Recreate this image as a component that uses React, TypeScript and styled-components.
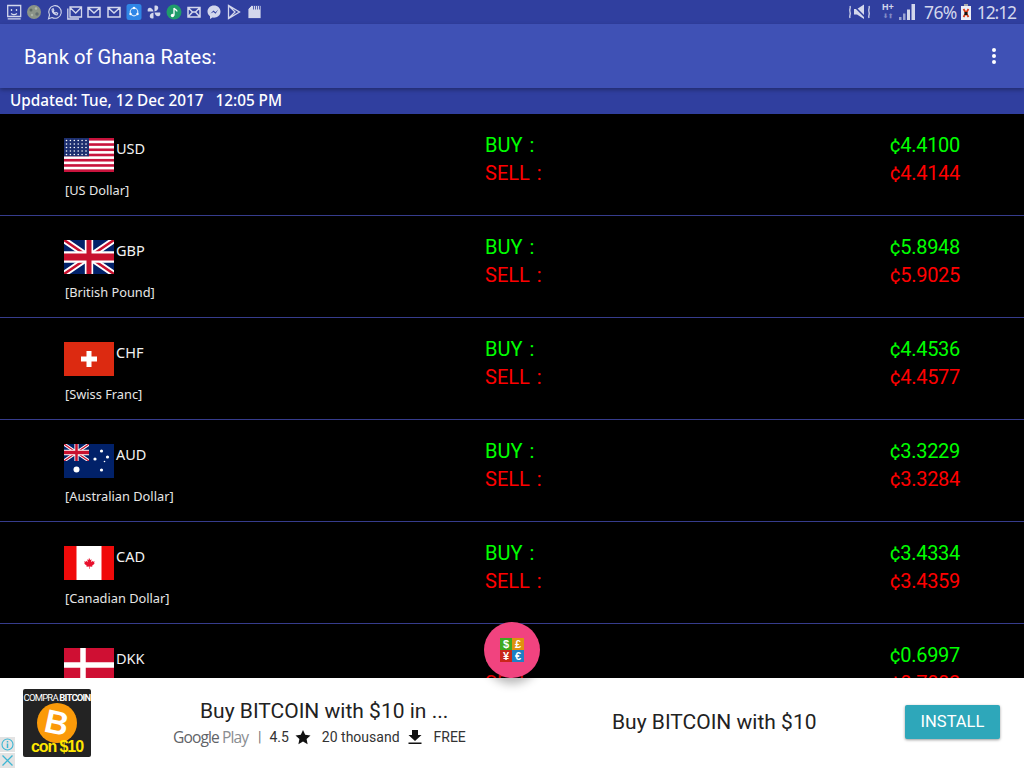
import React from "react";
import styled, { createGlobalStyle } from "styled-components";

const GlobalStyle = createGlobalStyle`
  html, body {
    margin: 0;
    padding: 0;
    background: #000;
    font-family: "Noto Sans", "Open Sans", sans-serif;
  }
  * { box-sizing: border-box; }
`;

const Screen = styled.div`
  position: relative;
  width: 1024px;
  height: 768px;
  overflow: hidden;
  display: flex;
  flex-direction: column;
  background: #000;
`;

const StatusBar = styled.div`
  height: 24px;
  flex: none;
  background: #303f9f;
  display: flex;
  align-items: center;
  justify-content: space-between;
  padding: 0 8px 0 7px;
  color: #d3d7ec;
`;

const StatusGroup = styled.div`
  display: flex;
  align-items: center;
  gap: 6px;
`;

const StatusRight = styled.div`
  display: flex;
  align-items: center;
`;

const StatusIconSvg = styled.svg`
  width: 14px;
  height: 16px;
  display: block;
  flex: none;
`;

const MuteIcon = styled.svg`
  width: 23px;
  height: 16px;
  display: block;
`;

const HPlus = styled.div`
  width: 14px;
  height: 18px;
  margin-left: 10px;
  font: 700 9px/9px "Liberation Sans", sans-serif;
  text-align: center;
  white-space: nowrap;
  span { display: block; font-size: 6px; line-height: 8px; opacity: 0.5; }
`;

const SignalIcon = styled.svg`
  width: 16px;
  height: 16px;
  margin-left: 4px;
  display: block;
`;

const Percent = styled.span`
  margin-left: 9px;
  font: 400 17.5px/24px "Noto Sans", sans-serif;
  letter-spacing: -0.6px;
`;

const BatteryIcon = styled.svg`
  width: 10px;
  height: 16px;
  margin-left: 4px;
  display: block;
`;

const Clock = styled.span`
  margin-left: 6px;
  font: 400 17.5px/24px "Noto Sans", sans-serif;
  letter-spacing: -1.1px;
`;

const Toolbar = styled.header`
  position: relative;
  z-index: 2;
  height: 64px;
  flex: none;
  background: #3f51b5;
  box-shadow: 0 2px 4px rgba(0, 0, 0, 0.3);
  display: flex;
  align-items: center;
  justify-content: space-between;
  padding: 2px 28px 0 24px;
`;

const ToolbarTitle = styled.h1`
  margin: 0;
  font: 400 20.2px/28px Roboto, sans-serif;
  color: #fff;
`;

const MoreDots = styled.div`
  display: flex;
  flex-direction: column;
  gap: 2px;
  margin-top: -2px;
  i { display: block; width: 4px; height: 4px; border-radius: 50%; background: #fff; }
`;

const UpdatedBar = styled.div`
  height: 26px;
  flex: none;
  background: #303f9f;
  padding: 0 10px;
  font: 500 15.3px/24px "Noto Sans", sans-serif;
  color: #fff;
  white-space: pre;
`;

const RateList = styled.div`
  flex: 1;
  min-height: 0;
  overflow: hidden;
  background: #000;
`;

const Row = styled.div`
  height: 102px;
  padding: 24px 64px 0;
  border-bottom: 1px solid #363c8c;
  display: grid;
  grid-template-columns: 421px 1fr auto;
`;

const CurrencyCol = styled.div`
  display: flex;
  flex-direction: column;
`;

const CodeLine = styled.div`
  display: flex;
  align-items: flex-start;
  gap: 2px;
  height: 34px;
`;

const FlagSvg = styled.svg`
  width: 50px;
  height: 34px;
  display: block;
  flex: none;
`;

const Code = styled.span`
  font: 400 14.5px/20px "Noto Sans", sans-serif;
  color: #f2f2f2;
`;

const CurrencyName = styled.div`
  margin: 8px 0 0 1px;
  font: 400 12.8px/20px "Noto Sans", sans-serif;
  color: #e6e6e6;
`;

const RateColumn = styled.div<{ $right?: boolean }>`
  display: flex;
  flex-direction: column;
  margin-top: -7px;
  text-align: ${(p) => (p.$right ? "right" : "left")};
  letter-spacing: ${(p) => (p.$right ? "-0.3px" : "0")};
  word-spacing: ${(p) => (p.$right ? "0" : "2px")};
`;

const RateText = styled.div<{ $sell?: boolean }>`
  height: 28px;
  font: 400 20px/28px Roboto, sans-serif;
  color: ${(p) => (p.$sell ? "#ff0000" : "#00ff00")};
`;

const Fab = styled.div`
  position: absolute;
  z-index: 5;
  left: 484px;
  top: 622px;
  width: 56px;
  height: 56px;
  border-radius: 50%;
  background: #f1437f;
  box-shadow: 0 6px 10px rgba(0, 0, 0, 0.28);
  display: flex;
  align-items: center;
  justify-content: center;
`;

const FabGrid = styled.div`
  display: grid;
  grid-template-columns: 12px 12px;
  grid-auto-rows: 12px;
`;

const FabCell = styled.span<{ $bg: string }>`
  background: ${(p) => p.$bg};
  color: #fff;
  font: 700 11px/12px "Liberation Sans", sans-serif;
  text-align: center;
`;

const AdBanner = styled.div`
  position: relative;
  z-index: 3;
  height: 90px;
  flex: none;
  background: #fff;
  display: grid;
  grid-template-columns: 23px 68px 81px 440px 1fr auto;
  align-items: center;
  padding-right: 24px;
  font-family: Roboto, sans-serif;
  color: #222;
`;

const AdIcon = styled.div`
  grid-column: 2;
  position: relative;
  width: 68px;
  height: 68px;
  background: #232323;
  border-radius: 2px;
  overflow: hidden;
  display: flex;
  flex-direction: column;
  align-items: center;
`;

const AdIconCaption = styled.div`
  margin-top: 3px;
  font: 400 9.5px/11px Roboto, sans-serif;
  letter-spacing: -0.8px;
  color: #fff;
  white-space: nowrap;
  b { font-weight: 700; }
`;

const CoinCircle = styled.div`
  width: 40px;
  height: 40px;
  border-radius: 50%;
  background: #fb9a09;
  color: #fff;
  font: 700 33px/39px "Liberation Sans", sans-serif;
  text-align: center;
  span { display: inline-block; transform: rotate(12deg); }
`;

const AdIconPrice = styled.div`
  position: absolute;
  left: 0;
  right: 0;
  bottom: 1px;
  text-align: center;
  font: 700 16px/18px "Liberation Sans", sans-serif;
  letter-spacing: -1.1px;
  color: #ffe600;
`;

const AdInfo = styled.div`
  grid-column: 4;
  display: flex;
  flex-direction: column;
  gap: 3px;
  margin-top: -1px;
`;

const AdTitle = styled.div`
  margin-left: 28px;
  font: 400 21px/26px Roboto, sans-serif;
  white-space: nowrap;
`;

const AdMeta = styled.div`
  display: flex;
  align-items: center;
  font: 400 14px/20px Roboto, sans-serif;
  color: #333;
  white-space: nowrap;
`;

const PlayLabel = styled.span`
  margin-left: 1px;
  width: 75px;
  font: 400 15.6px/20px "Open Sans", sans-serif;
  letter-spacing: -0.9px;
  color: #5f6368;
  em { font-style: normal; color: #8a8d91; }
`;

const MetaSep = styled.span`
  margin: 0 8px 0 10px;
  color: #777;
`;

const MetaIcon = styled.svg<{ $left: number; $right: number }>`
  width: 16px;
  height: 16px;
  margin-left: ${(p) => p.$left}px;
  margin-right: ${(p) => p.$right}px;
  flex: none;
`;

const AdHeadline = styled.div`
  grid-column: 5;
  font: 400 21px/26px Roboto, sans-serif;
  white-space: nowrap;
  margin-top: -2px;
`;

const InstallButton = styled.button`
  grid-column: 6;
  width: 95px;
  height: 34px;
  margin-top: -2px;
  border: 0;
  padding: 0;
  border-radius: 2px;
  background: #2ea7ba;
  box-shadow: 0 1px 3px rgba(0, 0, 0, 0.4);
  color: #fff;
  font: 400 16.5px/34px Roboto, sans-serif;
`;

const AdChoices = styled.div`
  position: absolute;
  left: 0;
  bottom: 0;
  width: 15px;
  height: 31px;
  display: flex;
  flex-direction: column;
  gap: 1px;
`;

const AdChoiceBox = styled.div`
  width: 15px;
  height: 15px;
  background: #e3e3e3;
  display: flex;
  align-items: center;
  justify-content: center;
  svg { display: block; width: 13px; height: 13px; }
`;

const stripes = Array.from({ length: 13 }, (_, i) => i);
const usStars: [number, number][] = [];
for (let r = 0; r < 5; r++) {
  for (let c = 0; c < 6; c++) usStars.push([2.5 + c * 3.9, 2.5 + r * 3.5]);
}

const UnionJack = () => (
  <>
    <rect width="60" height="30" fill="#012169" />
    <path d="M0 0L60 30M60 0L0 30" stroke="#fff" strokeWidth="6" />
    <path d="M0 0L60 30M60 0L0 30" stroke="#c8102e" strokeWidth="2.4" />
    <path d="M30 0V30M0 15H60" stroke="#fff" strokeWidth="10" />
    <path d="M30 0V30M0 15H60" stroke="#c8102e" strokeWidth="6" />
  </>
);

const Flag = ({ code }: { code: string }) => {
  switch (code) {
    case "USD":
      return (
        <FlagSvg viewBox="0 0 50 34">
          <rect width="50" height="34" fill="#fff" />
          {stripes.map((i) =>
            i % 2 === 0 ? <rect key={i} y={i * 2.615} width="50" height="2.615" fill="#c8133c" /> : null
          )}
          <rect width="25" height="18.3" fill="#1d2f6f" />
          {usStars.map(([x, y], i) => (
            <circle key={i} cx={x} cy={y} r="0.8" fill="#fff" />
          ))}
        </FlagSvg>
      );
    case "GBP":
      return (
        <FlagSvg viewBox="0 0 60 30" preserveAspectRatio="none">
          <UnionJack />
        </FlagSvg>
      );
    case "CHF":
      return (
        <FlagSvg viewBox="0 0 50 34">
          <rect width="50" height="34" fill="#dc2a11" />
          <path d="M22.5 9h5v5.500H33v5h-5.500V25h-5v-5.500H17v-5h5.500z" fill="#fff" />
        </FlagSvg>
      );
    case "AUD":
      return (
        <FlagSvg viewBox="0 0 50 34">
          <rect width="50" height="34" fill="#012169" />
          <svg width="25" height="17" viewBox="0 0 60 30" preserveAspectRatio="none">
            <UnionJack />
          </svg>
          <circle cx="12.5" cy="25.5" r="3" fill="#fff" />
          <circle cx="37.5" cy="7" r="1.6" fill="#fff" />
          <circle cx="31" cy="15" r="1.6" fill="#fff" />
          <circle cx="43.500" cy="13" r="1.6" fill="#fff" />
          <circle cx="37.500" cy="26" r="1.6" fill="#fff" />
          <circle cx="40.500" cy="17.500" r="0.800" fill="#fff" />
        </FlagSvg>
      );
    case "CAD":
      return (
        <FlagSvg viewBox="0 0 50 34">
          <rect width="50" height="34" fill="#fff" />
          <rect width="12.500" height="34" fill="#f00a0a" />
          <rect x="37.500" width="12.500" height="34" fill="#f00a0a" />
          <g transform="translate(6.250 4.250) scale(0.75)">
            <path d="M25 10l1.600 3 1.800-.9-.7 3.800 2-2 .5 1.300 2.300-.4-.8 2.400 1 .6-3.600 2.900.4 1.400-3.600-.5.1 3.200h-.9l.1-3.200-3.600.5.4-1.400-3.600-2.900 1-.6-.8-2.400 2.300.4.5-1.300 2 2-.7-3.800 1.800.9z" fill="#e8112d" />
          </g>
        </FlagSvg>
      );
    default:
      return (
        <FlagSvg viewBox="0 0 50 34">
          <rect width="50" height="34" fill="#cf0f33" />
          <path d="M19 0V34M0 17H50" stroke="#fff" strokeWidth="5.500" />
        </FlagSvg>
      );
  }
};

const rates = [
  { code: "USD", name: "[US Dollar]", buy: "4.4100", sell: "4.4144" },
  { code: "GBP", name: "[British Pound]", buy: "5.8948", sell: "5.9025" },
  { code: "CHF", name: "[Swiss Franc]", buy: "4.4536", sell: "4.4577" },
  { code: "AUD", name: "[Australian Dollar]", buy: "3.3229", sell: "3.3284" },
  { code: "CAD", name: "[Canadian Dollar]", buy: "3.4334", sell: "3.4359" },
  { code: "DKK", name: "[Danish Krone]", buy: "0.6997", sell: "0.7002" },
];

const blade = "M7.500 7.500V1.800c2.800-.8 4.300 1 3.600 3-.4 1.200-1.600 2.300-3.600 2.700z";

// notification icons, left to right
const leftIcons: React.ReactNode[] = [
  <path key="a" d="M.7 1.500h13v11h-13zM.7 14.800h13M4.500 5v2M9.500 5v2M4 9.500c2 1.500 4 1.500 6 0" fill="none" stroke="currentColor" strokeWidth="1.300" />,
  <g key="b">
    <circle cx="7" cy="8" r="7" fill="#8b9488" />
    <circle cx="4" cy="6" r="1.500" fill="#5f6b63" />
    <circle cx="9" cy="4.500" r="1.200" fill="#b4baac" />
    <circle cx="10" cy="10" r="1.700" fill="#626e70" />
    <circle cx="5" cy="11" r="1.200" fill="#aeb5a8" />
  </g>,
  <path key="c" d="M1.500 14.800l1-3.800A6.300 6.300 0 1 1 5 13.500zM5 5.500c0 3 2.500 5.500 5 5.500l.7-1.800-1.700-.8-.8.800c-.9-.5-1.600-1.200-2-2l.7-.8-.8-1.800z" fill="none" stroke="currentColor" strokeWidth="1.100" />,
  <path key="d" d="M3 3h11.500v10H3zM3 3.500l5.700 5.500 5.500-5.500M.8 4.500v10.500H12" fill="none" stroke="currentColor" strokeWidth="1.300" />,
  <path key="e" d="M1 3.500h12v9.500H1zM1.500 4l5.500 5 5.500-5" fill="none" stroke="currentColor" strokeWidth="1.500" />,
  <path key="f" d="M1 3.500h12v9.500H1zM1.500 4l5.500 5 5.500-5" fill="none" stroke="currentColor" strokeWidth="1.500" />,
  <g key="g">
    <rect x="-0.500" width="15" height="16" rx="2.500" fill="#2f86e6" />
    <circle cx="7" cy="8" r="3.800" fill="none" stroke="#cfe3fb" strokeWidth="1.200" />
    <circle cx="7" cy="4" r="1.200" fill="#fff" />
    <circle cx="3.500" cy="10" r="1.200" fill="#fff" />
    <circle cx="10.500" cy="10" r="1.200" fill="#fff" />
  </g>,
  <g key="h" fill="currentColor">
    <path d={blade} />
    <path d={blade} transform="rotate(90 7 8)" />
    <path d={blade} transform="rotate(180 7 8)" />
    <path d={blade} transform="rotate(270 7 8)" />
  </g>,
  <g key="i">
    <circle cx="7" cy="8" r="7.500" fill="#1f9c6a" />
    <path d="M7 4v7.500M7 4c1 1.800 3 1.800 3 3.500" fill="none" stroke="#fff" strokeWidth="1.300" />
    <circle cx="5.500" cy="11.500" r="1.700" fill="#fff" />
  </g>,
  <path key="j" d="M1 3.500h12v9.500H1zM1.500 4l4 4-4 4.500M12.500 4l-4 4 4 4.500M5.500 8h3" fill="none" stroke="currentColor" strokeWidth="1.500" />,
  <path key="k" d="M7 1.500C3.200 1.500.5 4.200.5 7.500c0 2 1 3.600 2.500 4.700V15l2.500-1.400c3.800.7 8-1.600 8-6.100 0-3.300-2.700-6-6.500-6zM3.500 9.500l3-3 2 1.700 2.800-2.700-2.800 4.200-2-1.700z" fill="currentColor" fillRule="evenodd" />,
  <path key="l" d="M1.500 1.500v13l11-6.500zM1.500 1.500l6.500 6.500-6.500 6.500" fill="none" stroke="currentColor" strokeWidth="1.300" />,
  <path key="m" d="M4.500 1.500H14v13H1V5zM6.500 2v3.500M8.500 2v3.500M10.500 2v3.500M12.500 2v3.500" fill="currentColor" stroke="#303f9f" strokeWidth="0.800" />,
];

const App = () => (
  <Screen>
    <GlobalStyle />
    <StatusBar>
      <StatusGroup>
        {leftIcons.map((icon, i) => (
          <StatusIconSvg key={i} viewBox="0 0 14 16" overflow="visible">
            {icon}
          </StatusIconSvg>
        ))}
      </StatusGroup>
      <StatusRight>
        <MuteIcon viewBox="0 0 23 16">
          <path d="M6 5h3l7-4.500V15l-7-4.500H6z" fill="currentColor" />
          <path d="M5 1l13 13" stroke="#303f9f" strokeWidth="1.500" />
          <path d="M2 2c1 2-1 3 0 6s-1 3 0 6M21 2c1 2-1 3 0 6s-1 3 0 6" fill="none" stroke="currentColor" strokeWidth="1.300" />
        </MuteIcon>
        <HPlus>
          H+
          <span>⬇⬆</span>
        </HPlus>
        <SignalIcon viewBox="0 0 16 16">
          <path d="M0 13h2.500v3H0zM4 9.500h2.500V16H4z" fill="currentColor" opacity="0.65" />
          <path d="M8 5.500h3V16H8zM12.500 0H16v16h-3.500z" fill="currentColor" />
        </SignalIcon>
        <Percent>76%</Percent>
        <BatteryIcon viewBox="0 0 10 16">
          <rect y="2" width="10" height="14" fill="#eceef7" />
          <rect x="3" width="4" height="2" fill="#aaa" />
          <path d="M2.500 5l5 8M7.500 5l-5 8" stroke="#d83a16" strokeWidth="1.800" />
          <path d="M3.500 8h3v3h-3z" fill="#111" />
        </BatteryIcon>
        <Clock>12:12</Clock>
      </StatusRight>
    </StatusBar>

    <Toolbar>
      <ToolbarTitle>Bank of Ghana Rates:</ToolbarTitle>
      <MoreDots>
        <i />
        <i />
        <i />
      </MoreDots>
    </Toolbar>

    <UpdatedBar>Updated: Tue, 12 Dec 2017   12:05 PM</UpdatedBar>

    <RateList>
      {rates.map((r) => (
        <Row key={r.code}>
          <CurrencyCol>
            <CodeLine>
              <Flag code={r.code} />
              <Code>{r.code}</Code>
            </CodeLine>
            <CurrencyName>{r.name}</CurrencyName>
          </CurrencyCol>
          <RateColumn>
            <RateText>BUY :</RateText>
            <RateText $sell>SELL :</RateText>
          </RateColumn>
          <RateColumn $right>
            <RateText>¢{r.buy}</RateText>
            <RateText $sell>¢{r.sell}</RateText>
          </RateColumn>
        </Row>
      ))}
    </RateList>

    <AdBanner>
      <AdIcon>
        <AdIconCaption>
          COMPRA <b>BITCOIN</b>
        </AdIconCaption>
        <CoinCircle>
          <span>B</span>
        </CoinCircle>
        <AdIconPrice>con $10</AdIconPrice>
      </AdIcon>
      <AdInfo>
        <AdTitle>Buy BITCOIN with $10 in ...</AdTitle>
        <AdMeta>
          <PlayLabel>
            Google <em>Play</em>
          </PlayLabel>
          <MetaSep>|</MetaSep>
          4.5
          <MetaIcon $left={6} $right={11} viewBox="0 0 16 16">
            <path d="M8 1l2.200 4.800 5.300.6-3.900 3.600 1 5.200L8 12.600l-4.600 2.600 1-5.200L.5 6.400l5.300-.6z" fill="#111" />
          </MetaIcon>
          20 thousand
          <MetaIcon $left={7} $right={11} viewBox="0 0 16 16">
            <path d="M5 1h6v5h3.500L8 12 1.500 6H5zM1.500 13.500h13V15h-13z" fill="#111" />
          </MetaIcon>
          FREE
        </AdMeta>
      </AdInfo>
      <AdHeadline>Buy BITCOIN with $10</AdHeadline>
      <InstallButton>INSTALL</InstallButton>
      <AdChoices>
        <AdChoiceBox>
          <svg viewBox="0 0 13 13">
            <circle cx="6.500" cy="6.500" r="5.500" fill="none" stroke="#3db6d3" strokeWidth="1.100" />
            <path d="M6.500 3v1.500M6.500 5.500V10" stroke="#3db6d3" strokeWidth="1.500" />
          </svg>
        </AdChoiceBox>
        <AdChoiceBox>
          <svg viewBox="0 0 13 13">
            <path d="M1.500 1.500l10 10M11.500 1.500l-10 10" stroke="#3db6d3" strokeWidth="1.300" />
          </svg>
        </AdChoiceBox>
      </AdChoices>
    </AdBanner>

    <Fab>
      <FabGrid>
        <FabCell $bg="#3fa91f">$</FabCell>
        <FabCell $bg="#e0920f">£</FabCell>
        <FabCell $bg="#c9261a">¥</FabCell>
        <FabCell $bg="#1f7fc4">€</FabCell>
      </FabGrid>
    </Fab>
  </Screen>
);

export default App;
